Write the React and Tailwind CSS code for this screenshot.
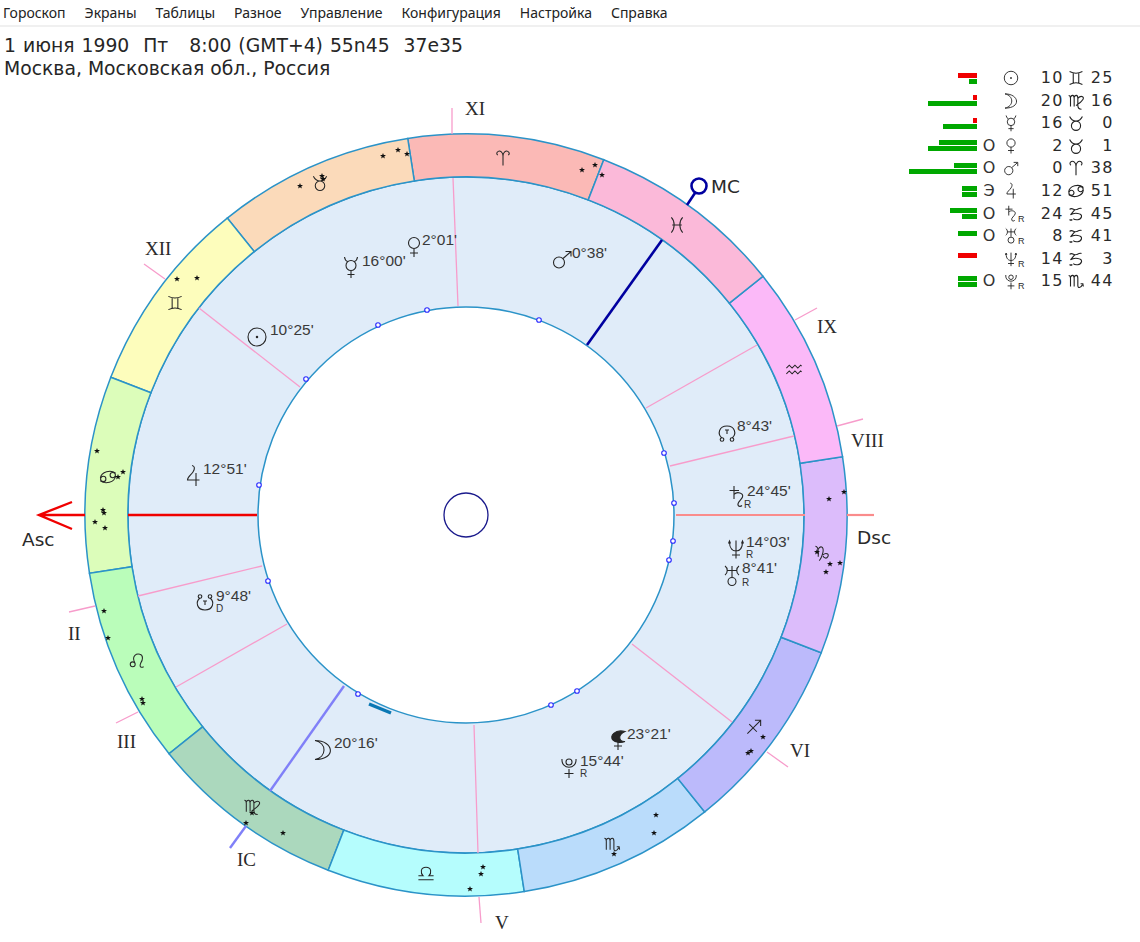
const CX = 466;
const CY = 515;

const menu = ["Гороскоп", "Экраны", "Таблицы", "Разное", "Управление", "Конфигурация", "Настройка", "Справка"];

// Symbol strokes, drawn round 0,0 in a box of about 24 units
const glyphs = {
  sun: <><circle cx="0" cy="0" r="9" /><circle cx="0" cy="0" r="0.7" fill="currentColor" /></>,
  moon: <path d="M-8 -9.5C11 -9.5 14 9.5 -8 9.5M-8 -9.5C4 -7 4 7 -8 9.5" />,
  mercury: <path d="M-6.5 -10Q-6 -6.5 -3.5 -5.5M6.5 -10Q6 -6.5 3.5 -5.5M5 -1.5A5 5 0 1 1 -5 -1.5A5 5 0 1 1 5 -1.5M0 3.5V11M-3.5 7.5H3.5" />,
  venus: <path d="M5.5 -4A5.5 5.5 0 1 1 -5.5 -4A5.5 5.5 0 1 1 5.5 -4M0 1.5V10M-4 6H4" />,
  mars: <path d="M2.5 3.5A5.5 5.5 0 1 1 -8.5 3.5A5.5 5.5 0 1 1 2.5 3.5M1 -0.5L8.5 -7M3.5 -7.5H9V-2.5" />,
  jupiter: <path d="M-1 -10.5C2 -10 2 -7 0 -4C-2 -1 -5.5 1 -5.5 4H6.5M3 -3V10" />,
  saturn: <path d="M-7.5 -6.5H2M-3 -11V2M-3 -2.5C0 -6 7 -4 5.5 0C4.5 3 0 5 1 8C1.5 10 4 9.5 5 8.5" />,
  uranus: <path d="M-7 -10C-4 -8 -4 -3 -7 -1M7 -10C4 -8 4 -3 7 -1M-5 -5.5H5M0 -10V1M4 5.5A4 4 0 1 1 -4 5.5A4 4 0 1 1 4 5.5" />,
  neptune: <path d="M-6.5 -7C-6.5 0 -3 2 0 2C3 2 6.5 0 6.5 -7M0 -8.5V9.5M-4 6H4M-7.5 -5.5L-6.5 -8L-5.5 -5.5M7.5 -5.5L6.5 -8L5.5 -5.5" />,
  pluto: <path d="M3 -5A3 3 0 1 1 -3 -5A3 3 0 1 1 3 -5M-7 -8C-8 3 8 3 7 -8M0 2V11M-4.5 6.5H4.5" />,
  lilith: <><path d="M7 -8.5C-3 -11 -9 -4 -5 0C-3 2 2 3.5 7 1.5C1 2 -1 -5 7 -8.5Z" fill="currentColor" /><path d="M0 2V10M-4 6H4" /></>,
  nodeUp: <><path d="M-5 5C-10 1 -8 -7 0 -7C8 -7 10 1 5 5" /><circle cx="-5" cy="6.5" r="1.8" /><circle cx="5" cy="6.5" r="1.8" /><path d="M-2 -3H2M0 -3V1" /></>,
  nodeDown: <><path d="M-5 -5C-10 -1 -8 7 0 7C8 7 10 -1 5 -5" /><circle cx="-5" cy="-6.5" r="1.8" /><circle cx="5" cy="-6.5" r="1.8" /><path d="M-2 -2H2M0 -2V2" /></>,
  aries: <path d="M0 8V-2C0 -6 -3 -8 -5 -7C-7 -6 -7 -4 -5.5 -3M0 -2C0 -6 3 -8 5 -7C7 -6 7 -4 5.5 -3" />,
  taurus: <path d="M5 3A5 5 0 1 1 -5 3A5 5 0 1 1 5 3M-7 -7C-5 -3 -3 -2 0 -2C3 -2 5 -3 7 -7" />,
  gemini: <path d="M-7 -7C-3 -5 3 -5 7 -7M-7 7C-3 5 3 5 7 7M-3 -5.5V5.5M3 -5.5V5.5" />,
  cancer: <><circle cx="-5" cy="2" r="2.8" /><circle cx="5" cy="-2" r="2.8" /><path d="M-8 1C-7 -6 3 -8 8 -4M8 -1C7 6 -3 8 -8 4" /></>,
  leo: <><circle cx="-4.5" cy="3.5" r="2.6" /><path d="M-2.5 1.5C-6 -6 0 -8 3 -7C7 -6 6 -1 4 2C2.5 5 3 8 7 6" /></>,
  virgo: <path d="M-8 -6C-7 -6 -6 -5 -6 -3V6M-6 -4C-5 -7 -2 -7 -2 -3V6M-2 -4C-1 -7 2 -7 2 -3V5C2 8 4 9 6 9M2 -3C6 -7 10 -4 7 -1C6 1 3 3 0 5" />,
  libra: <path d="M-8 7H8M-8 3H-3C-6 0 -6 -6 0 -6C6 -6 6 0 3 3H8" />,
  scorpio: <path d="M-8 -6C-7 -6 -6 -5 -6 -3V6M-6 -4C-5 -7 -2 -7 -2 -3V6M-2 -4C-1 -7 2 -7 2 -3V5C2 8 5 8 7 4M5 3L7.5 3L8 6" />,
  sagittarius: <path d="M-7 7L7 -7M1 -7H7V-1M-5 -3L3 5" />,
  capricorn: <path d="M-8 -7C-5 -7 -5 -3 -5 0V4M-5 -4C-3 -8 1 -7 0 -1C-1 3 -2 6 -4 8M0 2C3 -1 7 1 5 4C4 6 1 6 0 3" />,
  capricornTable: <path d="M-7 -5C-4 -8 -2 -3 1 -5C3 -6 5 -7 6 -6M-1 -5L-6 1C-2 -2 7 -1 6 3C5 7 -1 7 -3 5M-7 6C-6 7 -5 7 -4 6" />,
  aquarius: <path d="M-8 -2L-5 -5L-2 -2L1 -5L4 -2L7 -5L8 -4M-8 4L-5 1L-2 4L1 1L4 4L7 1L8 2" />,
  pisces: <path d="M-6 -8C-2 -4 -2 4 -6 8M6 -8C2 -4 2 4 6 8M-5 0H5" />,
};

// Zodiac ring: start angle (degrees, counter clockwise from east), colour, symbol spot
const signs = [
  { start: 68.8, color: "#fbb9b6", glyph: "aries", x: 503, y: 158 },
  { start: 98.8, color: "#fbdaba", glyph: "taurus", x: 320, y: 183 },
  { start: 128.8, color: "#fdfdbc", glyph: "gemini", x: 175, y: 303 },
  { start: 158.8, color: "#dcfdba", glyph: "cancer", x: 108, y: 477 },
  { start: 188.8, color: "#bafdba", glyph: "leo", x: 137, y: 661 },
  { start: 218.8, color: "#abd8bd", glyph: "virgo", x: 252, y: 806 },
  { start: 248.8, color: "#b5fdfd", glyph: "libra", x: 426, y: 873 },
  { start: 278.8, color: "#badcfb", glyph: "scorpio", x: 612, y: 844 },
  { start: 308.8, color: "#bcbafb", glyph: "sagittarius", x: 754, y: 727 },
  { start: 338.8, color: "#dcbcfb", glyph: "capricorn", x: 823, y: 553 },
  { start: 8.8, color: "#fbb9f8", glyph: "aquarius", x: 794, y: 370 },
  { start: 38.8, color: "#fbb9d9", glyph: "pisces", x: 677, y: 225 },
];

// Intermediate house cusps: inside the ring, and the stub outside it
const cusps = [
  [458, 306, 453, 178, 452, 108, 452, 134],
  [300, 387, 199, 308, 144, 264, 165, 279],
  [262, 566, 138, 596, 69, 612, 95, 606],
  [287, 624, 176, 687, 116, 723, 138, 712],
  [474, 725, 478, 853, 479, 897, 481, 923],
  [632, 644, 732, 722, 767, 752, 788, 767],
  [670, 466, 794, 436, 837, 426, 863, 419],
  [646, 408, 757, 345, 795, 320, 817, 308],
];

const houseLabels = [
  ["XI", 465, 115], ["XII", 145, 255], ["IX", 817, 333], ["VIII", 851, 447],
  ["II", 68, 640], ["III", 117, 748], ["V", 495, 929], ["VI", 790, 757], ["IC", 237, 866],
];

const angleLabels = [["Asc", 22, 546], ["Dsc", 857, 544], ["MC", 711, 193]];

const transits = [
  [306, 379], [378, 325], [427, 310], [539, 320], [664, 453], [674, 503], [673, 541],
  [669, 560], [259, 485], [268, 581], [358, 694], [551, 705], [577, 691],
];

const stars = [
  [383, 156], [398, 150], [407, 154], [300, 186], [322, 176], [323, 179], [177, 279], [197, 278],
  [582, 170], [595, 165], [602, 175], [829, 499], [844, 492], [817, 552], [830, 564], [840, 563],
  [826, 572], [763, 737], [751, 751], [748, 753], [656, 815], [654, 833], [614, 854], [483, 867],
  [481, 874], [470, 889], [252, 813], [246, 823], [283, 833], [97, 451], [123, 472], [118, 477],
  [103, 510], [104, 513], [95, 522], [105, 528], [104, 611], [108, 638], [142, 699], [143, 703],
];

const planets = [
  { glyph: "sun", x: 257, y: 337, text: "10°25'", tx: 270, ty: 335 },
  { glyph: "mercury", x: 351, y: 267, text: "16°00'", tx: 362, ty: 266 },
  { glyph: "venus", x: 414, y: 247, text: "2°01'", tx: 422, ty: 245 },
  { glyph: "mars", x: 562, y: 259, text: "0°38'", tx: 572, ty: 258 },
  { glyph: "nodeUp", x: 727, y: 433, text: "8°43'", tx: 737, ty: 431 },
  { glyph: "saturn", x: 737, y: 497, text: "24°45'", tx: 747, ty: 496, sub: "R", sx: 744, sy: 508 },
  { glyph: "neptune", x: 736, y: 549, text: "14°03'", tx: 746, ty: 547, sub: "R", sx: 746, sy: 558 },
  { glyph: "uranus", x: 732, y: 576, text: "8°41'", tx: 742, ty: 573, sub: "R", sx: 742, sy: 586 },
  { glyph: "lilith", x: 618, y: 740, text: "23°21'", tx: 627, ty: 739 },
  { glyph: "pluto", x: 569, y: 767, text: "15°44'", tx: 580, ty: 766, sub: "R", sx: 580, sy: 777 },
  { glyph: "moon", x: 323, y: 750, text: "20°16'", tx: 334, ty: 748 },
  { glyph: "jupiter", x: 193, y: 476, text: "12°51'", tx: 203, ty: 474 },
  { glyph: "nodeDown", x: 205, y: 603, text: "9°48'", tx: 216, ty: 601, sub: "D", sx: 216, sy: 612 },
];

// Right hand table. Bars: [width, red?], upper then lower
const rows = [
  { bars: [[19, true], [8, false]], mark: "", glyph: "sun", deg: "10", sign: "gemini", min: "25" },
  { bars: [[4, true], [49, false]], mark: "", glyph: "moon", deg: "20", sign: "virgo", min: "16" },
  { bars: [[4, true], [34, false]], mark: "", glyph: "mercury", deg: "16", sign: "taurus", min: "0" },
  { bars: [[38, false], [49, false]], mark: "O", glyph: "venus", deg: "2", sign: "taurus", min: "1" },
  { bars: [[23, false], [68, false]], mark: "O", glyph: "mars", deg: "0", sign: "aries", min: "38" },
  { bars: [[15, false], [15, false]], mark: "Э", glyph: "jupiter", deg: "12", sign: "cancer", min: "51" },
  { bars: [[27, false], [15, false]], mark: "O", glyph: "saturn", retro: true, deg: "24", sign: "capricornTable", min: "45" },
  { bars: [[19, false]], mark: "O", glyph: "uranus", retro: true, deg: "8", sign: "capricornTable", min: "41" },
  { bars: [[19, true]], mark: "", glyph: "neptune", retro: true, deg: "14", sign: "capricornTable", min: "3" },
  { bars: [[19, false], [19, false]], mark: "O", glyph: "pluto", retro: true, deg: "15", sign: "scorpio", min: "44" },
];

function polar(r, deg) {
  const a = (deg * Math.PI) / 180;
  return [CX + r * Math.cos(a), CY - r * Math.sin(a)];
}

function sector(start) {
  const [x0, y0] = polar(381, start);
  const [x1, y1] = polar(381, start + 30);
  const [x2, y2] = polar(338, start + 30);
  const [x3, y3] = polar(338, start);
  return `M${x0} ${y0}A381 381 0 0 0 ${x1} ${y1}L${x2} ${y2}A338 338 0 0 1 ${x3} ${y3}Z`;
}

function Glyph({ name, x, y, scale = 1, width = 1.1 }) {
  return (
    <g
      transform={`translate(${x} ${y}) scale(${scale})`}
      fill="none"
      stroke="currentColor"
      strokeWidth={width}
      className="text-[#262626]"
    >
      {glyphs[name]}
    </g>
  );
}

function TableGlyph({ name, width = 18 }) {
  return (
    <svg width={width} height={width} viewBox="-12 -12 24 24" className="shrink-0 text-[#222]">
      <g fill="none" stroke="currentColor" strokeWidth="1.2">
        {glyphs[name]}
      </g>
    </svg>
  );
}

function Wheel() {
  return (
    <svg viewBox="0 96 905 846" className="block h-[846px] w-[905px]">
      {/* middle band, white centre */}
      <circle cx={CX} cy={CY} r="273" fill="none" stroke="#e0ecf9" strokeWidth="130" />
      <circle cx={CX} cy={CY} r="338" fill="none" stroke="#2b93c8" strokeWidth="1.5" />
      <circle cx={CX} cy={CY} r="208" fill="none" stroke="#2b93c8" strokeWidth="1.5" />
      <circle cx={CX} cy={CY} r="22" fill="none" stroke="#1a1a8c" strokeWidth="1.3" />

      {signs.map((s) => (
        <path key={s.glyph} d={sector(s.start)} fill={s.color} stroke="#2b93c8" strokeWidth="1.5" />
      ))}

      {cusps.map((c, i) => (
        <g key={i} stroke="#f79ccb" strokeWidth="1.3">
          <line x1={c[0]} y1={c[1]} x2={c[2]} y2={c[3]} />
          <line x1={c[4]} y1={c[5]} x2={c[6]} y2={c[7]} />
        </g>
      ))}

      {/* Asc / Dsc */}
      <g stroke="#f00000" strokeWidth="2.4" fill="none">
        <line x1="128" y1="515" x2="257" y2="515" />
        <path d="M85 515H39M72 502L39 515L72 529" />
      </g>
      <g stroke="#fa8c8c" strokeWidth="2.2">
        <line x1="676" y1="515" x2="805" y2="515" />
        <line x1="847" y1="515" x2="874" y2="515" />
      </g>

      {/* MC / IC */}
      <g stroke="#0000a0" fill="none">
        <line x1="587" y1="345" x2="662" y2="240" strokeWidth="2.6" />
        <line x1="687" y1="205" x2="695" y2="193" strokeWidth="2.6" />
        <circle cx="699" cy="186" r="7.5" strokeWidth="2.6" />
      </g>
      <g stroke="#8080f8" strokeWidth="2.4">
        <line x1="344" y1="686" x2="270" y2="791" />
        <line x1="246" y1="826" x2="230" y2="848" />
      </g>

      <line x1="369" y1="704" x2="391" y2="713" stroke="#0a78b4" strokeWidth="3.4" />

      {transits.map(([x, y]) => (
        <circle key={`${x}-${y}`} cx={x} cy={y} r="2.3" fill="#fff" stroke="#2a2aff" strokeWidth="1.1" />
      ))}

      {signs.map((s) => (
        <Glyph key={s.glyph} name={s.glyph} x={s.x} y={s.y} scale={0.95} />
      ))}

      {stars.map(([x, y]) => (
        <polygon
          key={`${x}/${y}`}
          transform={`translate(${x} ${y}) scale(0.9)`}
          points="0,-3.4 0.9,-1 3.3,-1 1.4,0.5 2.1,2.9 0,1.5 -2.1,2.9 -1.4,0.5 -3.3,-1 -0.9,-1"
          fill="#111"
        />
      ))}

      {planets.map((p) => (
        <g key={p.glyph}>
          <Glyph name={p.glyph} x={p.x} y={p.y} />
          <text x={p.tx} y={p.ty} className="fill-[#3a3a3a] font-['Liberation_Sans',sans-serif] text-[15.5px]">
            {p.text}
          </text>
          {p.sub && (
            <text x={p.sx} y={p.sy} className="fill-[#333] font-['Liberation_Sans',sans-serif] text-[10px]">
              {p.sub}
            </text>
          )}
        </g>
      ))}

      {houseLabels.map(([label, x, y]) => (
        <text key={label} x={x} y={y} className="fill-[#2a2a2a] font-['Liberation_Serif',serif] text-[19px]">
          {label}
        </text>
      ))}
      {angleLabels.map(([label, x, y]) => (
        <text key={label} x={x} y={y} className="fill-[#2a2a2a] font-['DejaVu_Sans',sans-serif] text-[18.5px]">
          {label}
        </text>
      ))}
    </svg>
  );
}

function Positions() {
  return (
    <div className="flex flex-col pt-[40px] font-['DejaVu_Sans',sans-serif] text-[16px] tracking-[1.5px] text-[#2a2a2a]">
      {rows.map((r) => (
        <div key={r.glyph} className="flex h-[22.55px] items-center">
          <div className="flex w-[72px] flex-col items-end gap-px self-center">
            {[0, 1].map((i) => (
              <div
                key={i}
                className={`h-[5px] ${r.bars[i]?.[1] ? "bg-[#f00000]" : "bg-[#00a800]"}`}
                style={{ width: r.bars[i] ? r.bars[i][0] : 0 }}
              />
            ))}
          </div>
          <div className="w-[24px] text-center text-[16px] font-medium leading-none tracking-normal text-[#333]">{r.mark}</div>
          <div className="relative flex w-[20px] justify-center">
            <TableGlyph name={r.glyph} />
            {r.retro && (
              <span className="absolute top-[8px] left-[17px] font-['Liberation_Sans',sans-serif] text-[9px] tracking-normal">
                R
              </span>
            )}
          </div>
          <div className="w-[43px] text-right">{r.deg}</div>
          <div className="flex w-[23px] justify-center">
            <TableGlyph name={r.sign} width={22} />
          </div>
          <div className="w-[27px] text-right">{r.min}</div>
        </div>
      ))}
    </div>
  );
}

export default function App() {
  return (
    <div className="h-[942px] w-[1140px] overflow-hidden bg-white">
      <div className="flex h-[27px] items-center gap-[19px] border-b-2 border-[#f0f0f0] pl-[3px] font-['Noto_Sans',sans-serif] text-[14px] text-[#222]">
        {menu.map((m) => (
          <span key={m}>{m}</span>
        ))}
      </div>
      <div className="grid grid-cols-[905px_1fr]">
        <div>
          <div className="h-[69px] whitespace-pre pt-[7px] pl-[4px] font-['DejaVu_Sans',sans-serif] text-[18.8px] leading-[23px] text-[#262626]">
            <div className="[word-spacing:1px]">1 июня 1990  Пт   8:00 (GMT+4) 55n45  37e35</div>
            <div>Москва, Московская обл., Россия</div>
          </div>
          <Wheel />
        </div>
        <Positions />
      </div>
    </div>
  );
}
